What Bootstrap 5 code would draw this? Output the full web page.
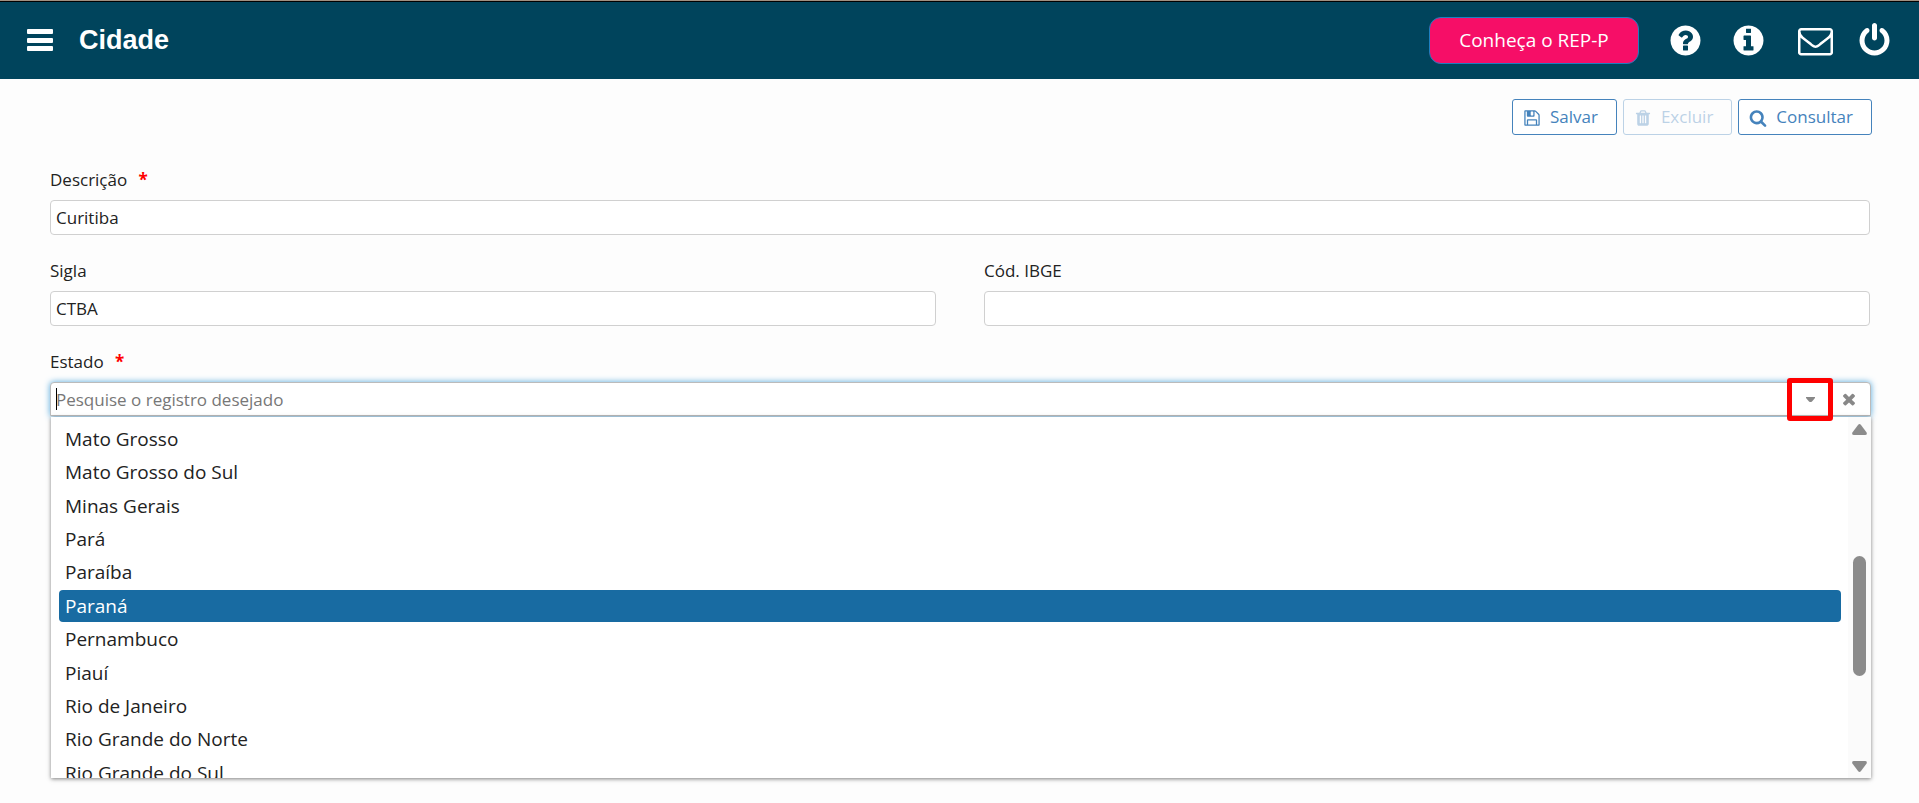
<!DOCTYPE html>
<html lang="pt-BR">
<head>
<meta charset="utf-8">
<meta name="viewport" content="width=device-width, initial-scale=1">
<title>Cidade</title>
<link href="https://cdn.jsdelivr.net/npm/bootstrap@5.3.0/dist/css/bootstrap.min.css" rel="stylesheet">
<style>
  body { background: #fdfdfd; color: #222; font-family: "Open Sans", "Noto Sans", sans-serif; font-size: 16px; line-height: 24px; }
  svg { fill: currentColor; display: block; flex: none; }
  .topbar { background: #00445c; color: #fff; height: 79px; border-top: 1px solid #a08f80; box-shadow: inset 0 1px #000; padding: 0 27px; }
  .topbar .btn-bare svg { width: 35px; height: 35px; }
  .topbar nav { gap: 28px; margin-left: 29px; }
  .topbar nav .btn-mail { margin: 0 -4px 0 4px; }
  .btn-bare { background: none; border: 0; padding: 0; color: inherit; }
  .topbar .btn-bare .bars { width: 26px; height: 22px; }
  .page-title { font: bold 27px/32px "Liberation Sans", Arial, sans-serif; margin: 0 0 0 26px; }
  .btn-rep { background: #f60e67; color: #fff; border: 1px solid #1d7fc0; border-radius: 12px; width: 210px; height: 47px; font-size: 19px; line-height: 24px; padding: 0; }
  .btn-rep:hover { background: #d80a58; color: #fff; border-color: #1d7fc0; }
  .page-body { padding: 20px 49px 20px 50px; }
  .tools { gap: 6px; margin-right: -2px; }
  .btn-tool { --bs-btn-color: #4583bc; --bs-btn-border-color: #4583bc; --bs-btn-bg: #fff; --bs-btn-disabled-color: #4583bc; --bs-btn-disabled-border-color: #4583bc; --bs-btn-disabled-bg: #fff; --bs-btn-disabled-opacity: .35; --bs-btn-border-radius: 3px; height: 36px; font-size: 17px; line-height: 24px; padding: 0 18px 0 10px; gap: 9px; }
  .btn-tool svg { width: 18px; height: 18px; margin-top: 2px; }
  .form-area { margin-top: 33px; }
  .field { margin-bottom: 24px; }
  .field label { display: block; font-size: 17px; line-height: 24px; margin-bottom: 8px; }
  .req { color: #f00; font-weight: 700; margin-left: 7px; }
  .field .form-control { height: 35px; padding: 0 5px; border: 1px solid #d0d0d0; border-radius: 4px; background: #fff; color: #222; font-size: 17px; line-height: 24px; box-shadow: none; }
  .two-col { --bs-gutter-x: 48px; }
  .combo { height: 34px; background: #fff; border: 1px solid #bbb; border-radius: 4px 4px 0 0; box-shadow: 0 0 6px #54a8dc; margin-right: -1px; padding-right: 2px; }
  .combo .form-control { height: 32px; border: 0; background: transparent; }
  .combo .form-control::placeholder { color: #777; opacity: 1; }
  .combo .cursor { left: 5px; top: 5px; width: 1px; height: 22px; background: #000; }
  .combo .btn-bare { width: 40px; height: 32px; color: #888; display: grid; place-items: center; }
  .combo .btn-open::after { content: ""; position: absolute; top: -5px; left: -4px; width: 46px; height: 43px; border: 5px solid #f00; border-radius: 3px; }
  .menu-panel { background: #fff; height: 361px; margin: 1px -1px 0 1px; box-shadow: 0 1px 4px rgba(0,0,0,.5); overflow: hidden; }
  .menu-clip { padding: 6px 7px 0 8px; overflow: hidden; }
  .state-list { height: 367px; font-size: 19px; line-height: 32px; }
  .state-list li { flex: 1 1 0; }
  .state-list a { display: block; height: 32px; padding: 0 6px; border-radius: 4px; color: #222; text-decoration: none; }
  .state-list a.selected { background: #186ba2; color: #fff; }
  .track { width: 23px; background: #fbfbfb; color: #8b8b8b; padding: 7px 0 6px; }
  .thumb { width: 13px; height: 120px; border-radius: 7px; background: #8b8b8b; margin-top: 36px; }
</style>
</head>
<body>
<header class="topbar d-flex align-items-center">
  <button class="btn-bare" type="button" aria-label="Menu"><svg class="bars" viewBox="0 0 26 22"><rect width="26" height="5" rx="1"/><rect y="9" width="26" height="5" rx="1"/><rect y="17" width="26" height="5" rx="1"/></svg></button>
  <h1 class="page-title">Cidade</h1>
  <button class="btn btn-rep ms-auto" type="button">Conheça o REP-P</button>
  <nav class="d-flex align-items-center" aria-label="Atalhos">
    <button class="btn-bare" type="button" aria-label="Ajuda"><svg viewBox="0 0 1792 1792"><path d="M1024 1376v-192q0-14-9-23t-23-9h-192q-14 0-23 9t-9 23v192q0 14 9 23t23 9h192q14 0 23-9t9-23zm256-672q0-88-55.500-163t-138.500-116-170-41q-243 0-371 213-15 24 8 42l132 100q7 6 19 6 16 0 25-12 53-68 86-92 34-24 86-24 48 0 85.500 26t37.500 59q0 38-20 61t-68 45q-63 28-115.500 86.500t-52.500 125.500v36q0 14 9 23t23 9h192q14 0 23-9t9-23q0-19 21.500-49.500t54.500-49.500q32-18 49-28.500t46-35 44.500-48 28-60.500 12.500-81zm384 192q0 209-103 385.500t-279.500 279.500-385.500 103-385.500-103-279.500-279.500-103-385.500 103-385.500 279.500-279.500 385.500-103 385.500 103 279.500 279.500 103 385.500z"/></svg></button>
    <button class="btn-bare" type="button" aria-label="Informações"><svg viewBox="0 0 1792 1792"><path d="M1152 1376v-160q0-14-9-23t-23-9h-96v-512q0-14-9-23t-23-9h-320q-14 0-23 9t-9 23v160q0 14 9 23t23 9h96v320h-96q-14 0-23 9t-9 23v160q0 14 9 23t23 9h448q14 0 23-9t9-23zm-128-896v-160q0-14-9-23t-23-9h-192q-14 0-23 9t-9 23v160q0 14 9 23t23 9h192q14 0 23-9t9-23zm640 416q0 209-103 385.500t-279.500 279.500-385.500 103-385.500-103-279.500-279.500-103-385.500 103-385.500 279.500-279.500 385.500-103 385.500 103 279.500 279.500 103 385.500z"/></svg></button>
    <button class="btn-bare btn-mail" type="button" aria-label="Mensagens"><svg viewBox="0 0 1792 1792"><path d="M1664 1504v-768q-32 36-69 66-268 206-426 338-51 43-83 67t-86.500 48.500-102.500 24.500h-2q-48 0-102.500-24.500t-86.500-48.500-83-67q-158-132-426-338-37-30-69-66v768q0 13 9.500 22.500t22.500 9.500h1472q13 0 22.500-9.500t9.500-22.500zm0-1051v-24.500t-.5-13-3-12.500-5.500-9-9-7.500-14-2.500h-1472q-13 0-22.500 9.500t-9.500 22.500q0 168 147 284 193 152 401 317 6 5 35 29.500t46 37.500 44.500 31.500 50.500 27.500 43 9h2q20 0 43-9t50.500-27.500 44.500-31.500 46-37.500 35-29.500q208-165 401-317 54-43 100.500-115.500t46.500-131.500zm128-37v1088q0 66-47 113t-113 47h-1472q-66 0-113-47t-47-113v-1088q0-66 47-113t113-47h1472q66 0 113 47t47 113z"/></svg></button>
    <button class="btn-bare" type="button" aria-label="Sair"><svg viewBox="0 0 1792 1792"><path d="M1664 896q0 156-61 298t-164 245-245 164-298 61-298-61-245-164-164-245-61-298q0-182 80.500-343t226.500-270q43-32 95.500-25t83.500 50q32 42 24.500 94.500t-49.500 84.500q-98 74-151.500 181t-53.500 228q0 104 40.500 198.500t109.500 163.500 163.500 109.500 198.500 40.500 198.500-40.500 163.500-109.500 109.500-163.500 40.500-198.500q0-121-53.500-228t-151.500-181q-42-32-49.500-84.500t24.500-94.500q31-43 84-50t95 25q146 109 226.500 270t80.500 343zm-640-768v640q0 52-38 90t-90 38-90-38-38-90v-640q0-52 38-90t90-38 90 38 38 90z"/></svg></button>
  </nav>
</header>

<main class="page-body">
  <div class="tools d-flex justify-content-end">
    <button class="btn btn-tool d-flex align-items-center" type="button"><svg viewBox="0 0 1792 1792"><path d="M512 1536h768v-384h-768v384zm896 0h128v-896q0-14-10-38.500t-20-34.500l-281-281q-10-10-34-20t-39-10v416q0 40-28 68t-68 28h-576q-40 0-68-28t-28-68v-416h-128v1280h128v-416q0-40 28-68t68-28h832q40 0 68 28t28 68v416zm-384-928v-320q0-13-9.500-22.500t-22.500-9.500h-192q-13 0-22.500 9.500t-9.500 22.500v320q0 13 9.500 22.500t22.500 9.500h192q13 0 22.500-9.500t9.500-22.500zm640 32v928q0 40-28 68t-68 28h-1344q-40 0-68-28t-28-68v-1344q0-40 28-68t68-28h928q40 0 88 20t76 48l280 280q28 28 48 76t20 88z"/></svg>Salvar</button>
    <button class="btn btn-tool d-flex align-items-center" type="button" disabled><svg viewBox="0 0 1792 1792"><path d="M704 1376v-704q0-14-9-23t-23-9h-64q-14 0-23 9t-9 23v704q0 14 9 23t23 9h64q14 0 23-9t9-23zm256 0v-704q0-14-9-23t-23-9h-64q-14 0-23 9t-9 23v704q0 14 9 23t23 9h64q14 0 23-9t9-23zm256 0v-704q0-14-9-23t-23-9h-64q-14 0-23 9t-9 23v704q0 14 9 23t23 9h64q14 0 23-9t9-23zm-544-992h448l-48-117q-7-9-17-11h-317q-10 2-17 11zm928 32v64q0 14-9 23t-23 9h-96v948q0 83-47 143.500t-113 60.500h-832q-66 0-113-58.500t-47-141.500v-952h-96q-14 0-23-9t-9-23v-64q0-14 9-23t23-9h309l70-167q15-37 54-63t79-26h320q40 0 79 26t54 63l70 167h309q14 0 23 9t9 23z"/></svg>Excluir</button>
    <button class="btn btn-tool d-flex align-items-center" type="button"><svg viewBox="0 0 1792 1792"><path d="M1216 832q0-185-131.500-316.500t-316.500-131.500-316.500 131.500-131.500 316.500 131.500 316.500 316.500 131.500 316.500-131.500 131.500-316.500zm512 832q0 52-38 90t-90 38q-54 0-90-38l-343-342q-179 124-399 124-143 0-273.500-55.500t-225-150-150-225-55.500-273.500 55.500-273.500 150-225 225-150 273.500-55.500 273.500 55.500 225 150 150 225 55.500 273.500q0 220-124 399l343 343q37 37 37 90z"/></svg>Consultar</button>
  </div>

  <form class="form-area">
    <div class="field">
      <label for="descricao">Descrição <span class="req">*</span></label>
      <input class="form-control" id="descricao" type="text" value="Curitiba">
    </div>
    <div class="row two-col">
      <div class="col-6 field">
        <label for="sigla">Sigla</label>
        <input class="form-control" id="sigla" type="text" value="CTBA">
      </div>
      <div class="col-6 field">
        <label for="ibge">Cód. IBGE</label>
        <input class="form-control" id="ibge" type="text">
      </div>
    </div>
    <div class="field mb-0">
      <label for="estado">Estado <span class="req">*</span></label>
      <div class="combo d-flex position-relative">
        <input class="form-control flex-fill" id="estado" type="text" placeholder="Pesquise o registro desejado" autocomplete="off">
        <span class="cursor position-absolute"></span>
        <button class="btn-bare btn-open position-relative z-2" type="button" aria-label="Abrir lista"><svg width="9" height="5" viewBox="0 0 9 5"><path d="M0 0H9V1L6 4.500Q4.500 5.500 3 4.500L0 1Z"/></svg></button>
        <button class="btn-bare" type="button" aria-label="Limpar"><svg width="18" height="18" viewBox="0 0 1792 1792"><path d="M1490 1322q0 40-28 68l-136 136q-28 28-68 28t-68-28l-294-294-294 294q-28 28-68 28t-68-28l-136-136q-28-28-28-68t28-68l294-294-294-294q-28-28-28-68t28-68l136-136q28-28 68-28t68 28l294 294 294-294q28-28 68-28t68 28l136 136q28 28 28 68t-28 68l-294 294 294 294q28 28 28 68z"/></svg></button>
      </div>
      <div class="menu-panel d-flex position-relative">
        <div class="menu-clip flex-fill">
          <ul class="state-list list-unstyled d-flex flex-column m-0">
            <li><a href="#">Mato Grosso</a></li>
            <li><a href="#">Mato Grosso do Sul</a></li>
            <li><a href="#">Minas Gerais</a></li>
            <li><a href="#">Pará</a></li>
            <li><a href="#">Paraíba</a></li>
            <li><a href="#" class="selected">Paraná</a></li>
            <li><a href="#">Pernambuco</a></li>
            <li><a href="#">Piauí</a></li>
            <li><a href="#">Rio de Janeiro</a></li>
            <li><a href="#">Rio Grande do Norte</a></li>
            <li><a href="#">Rio Grande do Sul</a></li>
          </ul>
        </div>
        <div class="track d-flex flex-column align-items-center justify-content-between" aria-hidden="true">
          <svg width="15" height="11" viewBox="0 0 15 11"><path d="M6 1Q7.500-1 9 1L14.600 8.500Q15.500 11 13 11H2Q-.5 11 .4 8.500Z"/></svg>
          <div class="thumb"></div>
          <svg width="15" height="11" viewBox="0 0 15 11"><path d="M6 10Q7.500 12 9 10L14.600 2.500Q15.500 0 13 0H2Q-.5 0 .4 2.500Z"/></svg>
        </div>
      </div>
    </div>
  </form>
</main>
<script src="https://cdn.jsdelivr.net/npm/bootstrap@5.3.0/dist/js/bootstrap.bundle.min.js"></script>
</body>
</html>
